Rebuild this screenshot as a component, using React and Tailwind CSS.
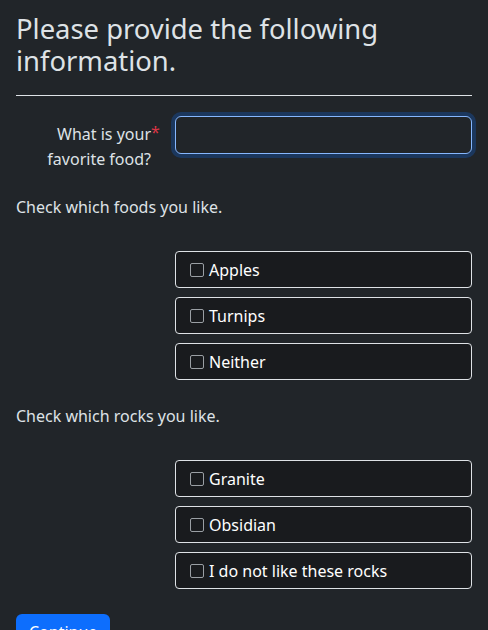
import { useState } from "react";

const foods = ["Apples", "Turnips", "Neither"];
const rocks = ["Granite", "Obsidian", "I do not like these rocks"];

const CheckCard = ({ label }) => {
  const [on, setOn] = useState(false);
  return (
    <label className="flex items-center h-[37px] px-[14px] bg-[#191b1e] border border-[#dee2e6] rounded-[4px] text-[16px] text-white cursor-pointer">
      <span
        onClick={() => setOn(!on)}
        className={`w-[14px] h-[14px] mr-[5px] border border-[#9a9fa4] rounded-[2px] ${on ? "bg-[#0d6efd]" : ""}`}
      ></span>
      {label}
    </label>
  );
};

const Group = ({ title, items }) => (
  <div>
    <p className="text-[16px] leading-[24px] mb-[32px]">{title}</p>
    <div className="flex flex-col gap-[9px] ml-[159px]">
      {items.map((it) => (
        <CheckCard key={it} label={it} />
      ))}
    </div>
  </div>
);

export default function App() {
  return (
    <div
      className="min-h-[630px] bg-[#212529] text-[#dee2e6] px-[16px] pt-[13px]"
      style={{ fontFamily: "'Noto Sans', sans-serif" }}
    >
      <h1 className="text-[27.4px] leading-[32px] text-[#dee2e6] mb-[18px]">
        Please provide the following information.
      </h1>
      <hr className="border-t border-[#dee2e6] mb-[20px]" />

      <div className="flex items-start mb-[23px]">
        <label className="w-[147px] text-right text-[16px] leading-[25px] pt-[6px] pl-[28px] pr-[12px]">
          What is your
          <span className="relative">
            <span className="absolute left-0 -top-[3px] text-[#dc3545]">*</span>
          </span>{" "}
          favorite food?
        </label>
        <input
          type="text"
          className="ml-[12px] flex-1 h-[38px] bg-[#212529] border border-[#86b7fe] rounded-[6px] outline-none shadow-[0_0_0_4px_rgba(13,110,253,0.25)] px-3 text-[16px] text-[#dee2e6]"
        />
      </div>

      <div className="mb-[24px]">
        <Group title="Check which foods you like." items={foods} />
      </div>
      <div className="mb-[25px]">
        <Group title="Check which rocks you like." items={rocks} />
      </div>

      <button className="bg-[#0d6efd] text-white text-[16px] leading-[24px] px-[13px] py-[6px] rounded-[6px]">
        Continue
      </button>
    </div>
  );
}
